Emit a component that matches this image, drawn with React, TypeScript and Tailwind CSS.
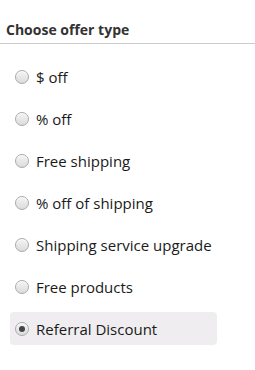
import React, { useState } from 'react';

const OPTIONS = [
  '$ off',
  '% off',
  'Free shipping',
  '% off of shipping',
  'Shipping service upgrade',
  'Free products',
  'Referral Discount',
];

const Radio: React.FC<{ checked: boolean }> = ({ checked }) => (
  <span className="flex h-[14px] w-[14px] shrink-0 items-center justify-center rounded-full border border-[#a9a9a9] bg-gradient-to-b from-[#f4f4f4] to-[#dcdcdc] shadow-[inset_0_1px_0_#fff]">
    {checked && <span className="h-[6px] w-[6px] rounded-full bg-[#444]" />}
  </span>
);

export default function App() {
  const [selected, setSelected] = useState(6);

  return (
    <div className="h-[370px] w-[255px] bg-white font-['Open_Sans',sans-serif] text-[#1a1a1a]">
      <div className="border-b border-[#cccccc] px-[6px] pb-[3px] pt-[20px]">
        <h2 className="text-[14px] font-bold leading-[20px] text-[#333]">Choose offer type</h2>
      </div>
      <div className="flex flex-col gap-[9px] pl-[10px] pt-[16px]">
        {OPTIONS.map((label, i) => (
          <div
            key={label}
            onClick={() => setSelected(i)}
            className={`flex h-[33px] w-[207px] cursor-pointer items-center gap-[7px] rounded-[4px] pl-[5px] ${
              selected === i ? 'bg-[#efedf0]' : ''
            }`}
          >
            <Radio checked={selected === i} />
            <span className="text-[15px] leading-[20px]">{label}</span>
          </div>
        ))}
      </div>
    </div>
  );
}
